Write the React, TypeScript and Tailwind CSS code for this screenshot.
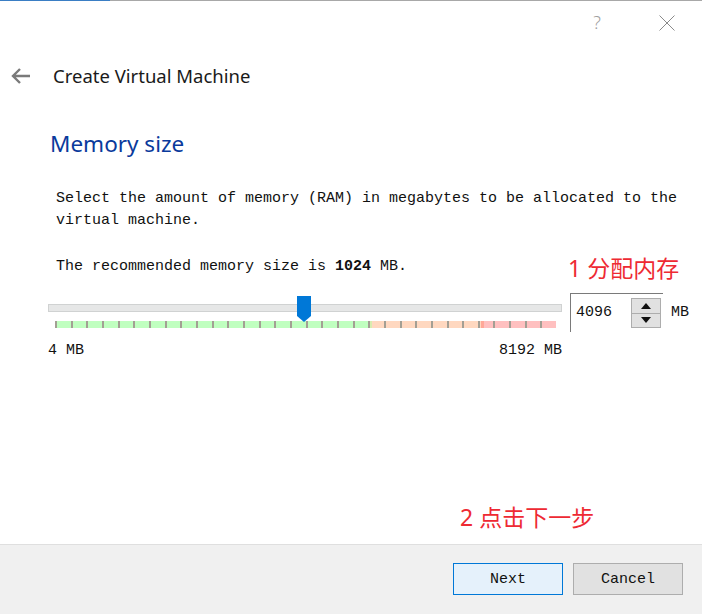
const TICKS = Array.from({ length: 32 }, (_, i) => i);

function BackArrow() {
  return (
    <svg width="20" height="16" viewBox="0 0 20 16" fill="none">
      <path d="M2 8H19M9 1L2 8L9 15" stroke="#7a7a7a" strokeWidth="2.4" />
    </svg>
  );
}

function CloseIcon() {
  return (
    <svg width="16" height="16" viewBox="0 0 16 16" fill="none">
      <path d="M0.5 0.5L15.5 15.5M15.5 0.5L0.5 15.5" stroke="#8a8a8a" strokeWidth="1" />
    </svg>
  );
}

function Handle() {
  return (
    <svg width="14" height="26" viewBox="0 0 14 26">
      <path d="M0 0H14V20L7 26L0 20Z" fill="#0078d7" />
    </svg>
  );
}

function Arrow({ up }: { up?: boolean }) {
  return (
    <svg width="10" height="6" viewBox="0 0 10 6">
      <path d={up ? "M0 6L5 0L10 6Z" : "M0 0L5 6L10 0Z"} fill="#111" />
    </svg>
  );
}

export default function App() {
  const mono = "font-['Liberation_Mono',monospace] text-[15px] text-[#111]";
  return (
    <div className="relative flex h-[614px] w-[702px] flex-col overflow-hidden bg-white font-['Noto_Sans',sans-serif]">
      <div className="flex h-px">
        <div className="w-[110px] bg-[#3a7ec4]" />
        <div className="flex-1 bg-[#a8a8a8]" />
      </div>

      <div className="flex h-[43px] items-center justify-end">
        <span className="mr-[58px] text-[18px] font-light text-[#a0a0a0]">?</span>
        <div className="mr-[27px]">
          <CloseIcon />
        </div>
      </div>

      <div className="flex h-[64px] items-center">
        <div className="ml-[11px] w-[42px]">
          <BackArrow />
        </div>
        <h1 className="text-[18.5px] text-[#1a1a1a]">Create Virtual Machine</h1>
      </div>

      <h2 className="ml-[50px] mt-[21px] text-[22.5px] leading-[30px] text-[#0a3a9c]">Memory size</h2>

      <p className={`${mono} ml-[56px] mt-[29px] leading-[22px]`}>
        Select the amount of memory (RAM) in megabytes to be allocated to the
        <br />
        virtual machine.
      </p>

      <p className={`${mono} ml-[56px] mt-[24px] leading-[22px]`}>
        The recommended memory size is <b>1024</b> MB.
      </p>

      <div className="ml-[48px] mt-[15px] flex items-start">
        <div className="relative h-[39px] w-[514px]">
          <div className="mt-[11px] h-[8px] border border-[#d0d2d2] bg-[#e6e7e7]" />
          <div className="relative ml-[7px] mt-[9px] h-[7px] w-[501px] bg-[linear-gradient(to_right,#c0ffc0_62.8%,#d8ecb0_62.8%,#d8ecb0_63.2%,#ffd8c0_63.2%,#ffd8c0_85%,#ffa898_85%,#ffa898_85.6%,#ffc0c0_85.6%)]">
            {TICKS.map((i) => (
              <div
                key={i}
                className="absolute top-0 h-[7px] w-[2px] bg-[#a39f94]"
                style={{ left: `${i * 15.66}px` }}
              />
            ))}
          </div>
          <div className="absolute left-[249px] top-[3px]">
            <Handle />
          </div>
        </div>

        <div className="ml-[8px] flex h-[39px] w-[93px] items-center border-l border-t border-[#7a7a7a]">
          <span className={`${mono} ml-[5px] w-[55px]`}>4096</span>
          <div className="flex h-[30px] w-[30px] flex-col border border-[#adadad] bg-[#e1e1e1]">
            <div className="flex flex-1 items-center justify-center border-b border-[#adadad]">
              <Arrow up />
            </div>
            <div className="flex flex-1 items-center justify-center">
              <Arrow />
            </div>
          </div>
        </div>
        <span className={`${mono} ml-[8px] mt-[9px]`}>MB</span>
      </div>

      <div className={`${mono} ml-[48px] mt-[8px] flex w-[514px] justify-between leading-[22px]`}>
        <span>4 MB</span>
        <span>8192 MB</span>
      </div>

      <span className="absolute left-[568px] top-[253px] font-['Noto_Sans','Noto_Sans_CJK_SC',sans-serif] text-[23px] leading-[30px] text-[#ee2a33]">
        1 分配内存
      </span>
      <span className="absolute left-[460px] top-[502px] font-['Noto_Sans','Noto_Sans_CJK_SC',sans-serif] text-[23px] leading-[30px] text-[#ee2a33]">
        2 点击下一步
      </span>

      <div className="mt-auto flex h-[70px] justify-end gap-[10px] border-t border-[#dfdfdf] bg-[#f0f0f0] pr-[19px] pt-[18px]">
        <button className={`${mono} h-[32px] w-[110px] border border-[#0078d7] bg-[#e5f1fb] pt-[2px]`}>Next</button>
        <button className={`${mono} h-[32px] w-[110px] border border-[#adadad] bg-[#e1e1e1] pt-[2px]`}>Cancel</button>
      </div>
    </div>
  );
}
